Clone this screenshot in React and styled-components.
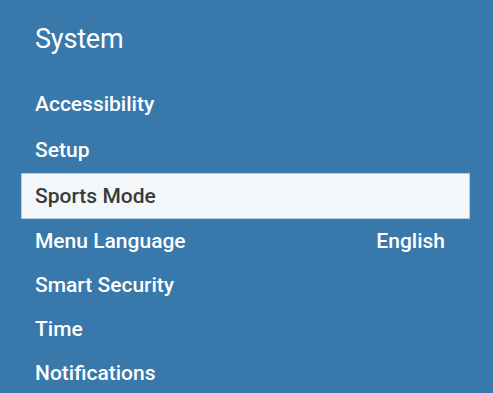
import React from "react";
import styled, { createGlobalStyle } from "styled-components";

const GlobalStyle = createGlobalStyle`
  html, body {
    margin: 0;
    padding: 0;
    background: #3878ab;
  }
  body {
    font-family: Roboto, "Liberation Sans", sans-serif;
  }
`;

const items = [
  { label: "Accessibility" },
  { label: "Setup" },
  { label: "Sports Mode", selected: true },
  { label: "Menu Language", value: "English" },
  { label: "Smart Security" },
  { label: "Time" },
  { label: "Notifications" },
];

const Screen = styled.div`
  width: 493px;
  height: 393px;
  overflow: hidden;
  background: #3878ab;
  display: flex;
  flex-direction: column;
  padding: 0 23px 0 21px;
  box-sizing: border-box;
`;

const Title = styled.h1`
  margin: 0;
  padding: 23px 0 0 14px;
  height: 81px;
  flex-shrink: 0;
  box-sizing: border-box;
  font-size: 27px;
  font-weight: 400;
  color: #ffffff;
  letter-spacing: -0.2px;
`;

const Menu = styled.ul`
  list-style: none;
  margin: 0;
  padding: 0;
  display: grid;
  grid-template-rows: 46px 46px 46px 44px 44px 44px 44px;
`;

const Row = styled.li`
  box-sizing: border-box;
  display: flex;
  align-items: center;
  justify-content: space-between;
  padding: 0 24px 0 13px;
  font-size: 21px;
  font-weight: 500;
  color: ${(p) => (p.$selected ? "#3a3a3a" : "#ffffff")};
  background: ${(p) => (p.$selected ? "#f3f7fa" : "transparent")};
  border: 1px solid ${(p) => (p.$selected ? "#b4cde0" : "transparent")};
`;

const Value = styled.span`
  font-weight: 500;
`;

export default function App() {
  return (
    <>
      <GlobalStyle />
      <Screen>
        <Title>System</Title>
        <Menu>
          {items.map((item) => (
            <Row key={item.label} $selected={item.selected}>
              <span>{item.label}</span>
              {item.value && <Value>{item.value}</Value>}
            </Row>
          ))}
        </Menu>
      </Screen>
    </>
  );
}
